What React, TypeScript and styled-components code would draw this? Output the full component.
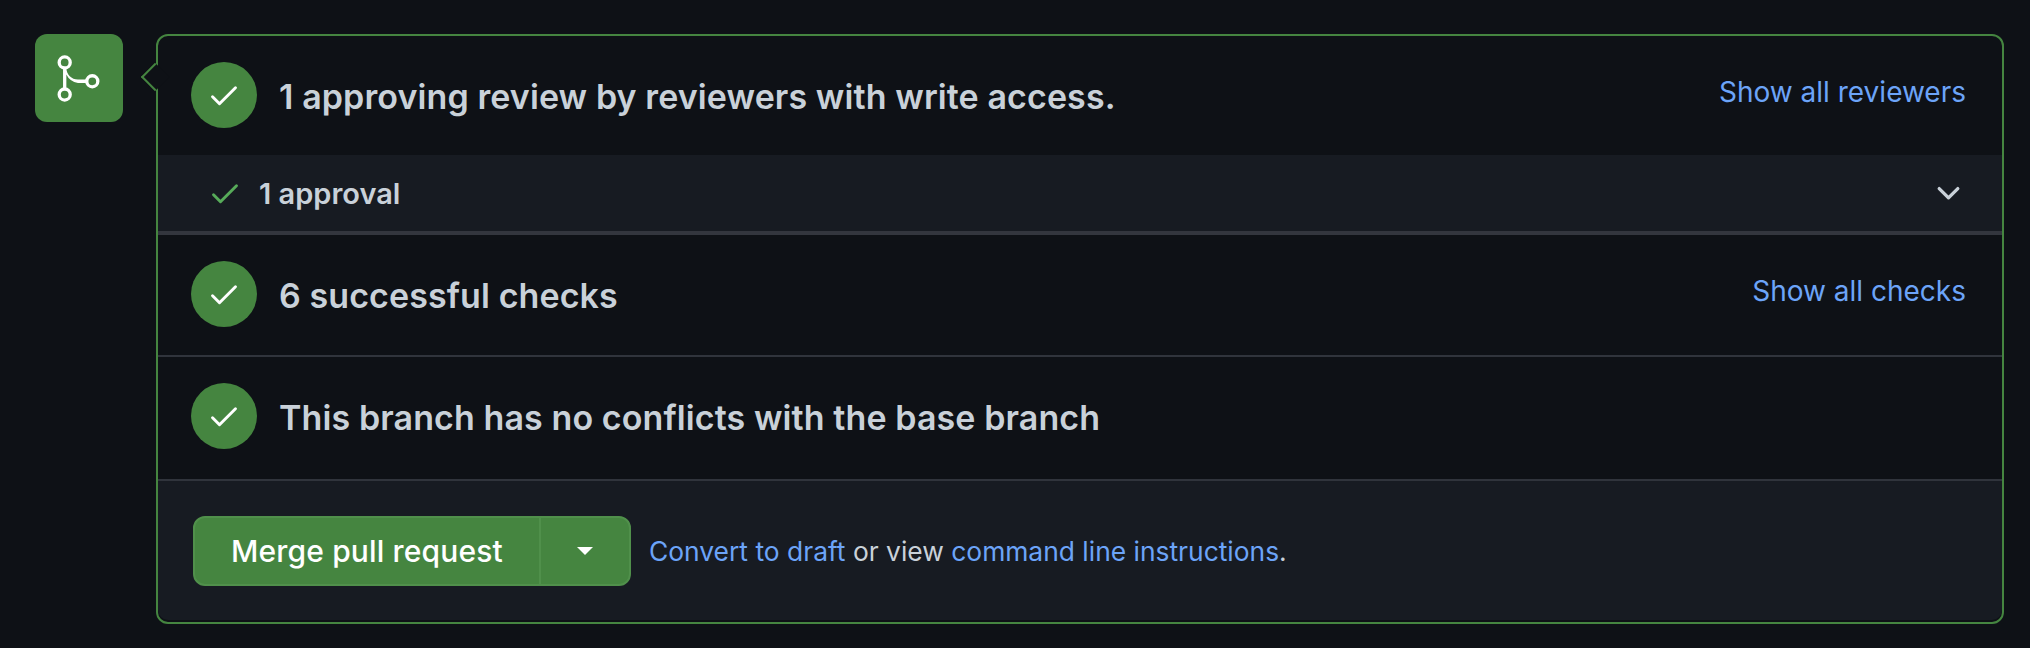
import styled, { createGlobalStyle } from "styled-components";

const GlobalStyle = createGlobalStyle`
	html, body {
		margin: 0;
		padding: 0;
		background: #0e1116;
	}
	body {
		font-family: Inter, "Liberation Sans", sans-serif;
		color: #c9d1d9;
	}
`;

const green = "#458540";

const Page = styled.div`
	display: flex;
	align-items: flex-start;
	width: 2030px;
	height: 648px;
	box-sizing: border-box;
	padding: 34px 26px 0 35px;
	gap: 33px;
	background: #0e1116;
`;

const Badge = styled.div`
	flex: none;
	display: flex;
	align-items: center;
	justify-content: center;
	width: 88px;
	height: 88px;
	padding-right: 1px;
	box-sizing: border-box;
	border-radius: 12px;
	background: ${green};
	color: #fff;
`;

const Panel = styled.section`
	position: relative;
	flex: 1;
	box-sizing: border-box;
	height: 590px;
	border: 2px solid ${green};
	border-radius: 12px;

	&::before {
		content: "";
		position: absolute;
		left: -13px;
		top: 31px;
		width: 20px;
		height: 20px;
		box-sizing: border-box;
		background: #0e1116;
		border-left: 2px solid ${green};
		border-bottom: 2px solid ${green};
		transform: rotate(45deg);
	}
`;

const Row = styled.div<{ $height: number; $divider?: boolean }>`
	display: flex;
	align-items: flex-start;
	box-sizing: border-box;
	height: ${(p) => p.$height}px;
	padding: 26px 36px 0 33px;
	gap: 22px;
	border-bottom: ${(p) => (p.$divider ? "2px solid #30343c" : "none")};
`;

const Circle = styled.div`
	flex: none;
	display: flex;
	align-items: center;
	justify-content: center;
	width: 66px;
	height: 66px;
	border-radius: 50%;
	background: ${green};
	color: #fff;
`;

const Heading = styled.h3`
	flex: 1;
	margin: 0;
	padding-top: 15px;
	font-size: 34px;
	letter-spacing: 0.1px;
	line-height: 40px;
	font-weight: 600;
	color: #c9d1d9;
`;

const SideLink = styled.a`
	flex: none;
	padding-top: 13px;
	font-size: 28px;
	line-height: 34px;
	color: #6ca4f8;
`;

const SubRow = styled.div`
	display: flex;
	align-items: center;
	box-sizing: border-box;
	height: 80px;
	padding: 0 36px 0 49px;
	background: #171b22;
	border-bottom: 4px solid #33363e;
	color: #c9d1d9;
`;

const SubCheck = styled.span`
	display: flex;
	margin-right: 16px;
	color: #57ab5a;
`;

const SubLabel = styled.span`
	flex: 1;
	font-size: 29px;
	font-weight: 600;
`;

const Footer = styled.div`
	display: flex;
	align-items: center;
	box-sizing: border-box;
	height: 141px;
	padding: 0 35px;
	gap: 18px;
	background: #171b22;
	border-top: 2px solid #30343c;
	border-radius: 0 0 10px 10px;
	font-size: 26.4px;
`;

const ButtonGroup = styled.div`
	display: flex;
	height: 70px;
	box-sizing: border-box;
	border: 2px solid #50904b;
	border-radius: 12px;
	background: ${green};
	color: #fff;
`;

const MergeButton = styled.div`
	display: flex;
	align-items: center;
	width: 346px;
	box-sizing: border-box;
	padding-left: 36px;
	font-size: 30px;
	letter-spacing: 0.15px;
	font-weight: 500;
	border-right: 2px solid #50904b;
`;

const CaretButton = styled.div`
	display: flex;
	align-items: center;
	justify-content: center;
	flex: none;
	width: 88px;

	&::after {
		content: "";
		border-style: solid;
		border-width: 8px 8px 0;
		border-color: #fff transparent transparent;
	}
`;

const Hint = styled.p`
	margin: 0;
	color: #c9d1d9;
`;

const InlineLink = styled.a`
	color: #6ca4f8;
`;

function CheckIcon({ size }: { size: number }) {
	return (
		<svg
			width={size}
			height={size}
			viewBox="0 0 16 16"
			fill="none"
			stroke="currentColor"
			strokeWidth={1.3}
			strokeLinecap="round"
			strokeLinejoin="round"
		>
			<path d="M2.9 8.75 6 11.85l7.1-7.1" />
		</svg>
	);
}

function ChevronIcon() {
	return (
		<svg width={35} height={35} viewBox="0 0 16 16" fill="currentColor">
			<path d="M12.78 5.22a.749.749 0 0 1 0 1.06l-4.25 4.25a.749.749 0 0 1-1.06 0L3.22 6.28a.749.749 0 1 1 1.06-1.06L8 8.939l3.72-3.719a.749.749 0 0 1 1.06 0Z" />
		</svg>
	);
}

function MergeIcon() {
	return (
		<svg width={53} height={53} viewBox="0 0 24 24" fill="currentColor">
			<path d="M15 13.25a3.25 3.25 0 1 1 6.5 0 3.25 3.25 0 0 1-6.5 0Zm-12.5 6a3.25 3.25 0 1 1 6.5 0 3.25 3.25 0 0 1-6.5 0Zm0-14.5a3.25 3.25 0 1 1 6.5 0 3.25 3.25 0 0 1-6.5 0ZM5.75 6.5a1.75 1.75 0 1 0-.001-3.501A1.75 1.75 0 0 0 5.75 6.5Zm0 14.5a1.75 1.75 0 1 0-.001-3.501A1.75 1.75 0 0 0 5.75 21Zm12.5-6a1.75 1.75 0 1 0-.001-3.501A1.75 1.75 0 0 0 18.25 15Z" />
			<path d="M6.5 7.25c0 2.9 2.35 5.25 5.25 5.25h4.5V14h-4.5A6.75 6.75 0 0 1 6.5 10.243v6.507H5V7.25h1.5Z" />
		</svg>
	);
}

export default function App() {
	return (
		<>
			<GlobalStyle />
			<Page>
				<Badge>
					<MergeIcon />
				</Badge>
				<Panel>
					<Row $height={119}>
						<Circle>
							<CheckIcon size={36} />
						</Circle>
						<Heading>1 approving review by reviewers with write access.</Heading>
						<SideLink>Show all reviewers</SideLink>
					</Row>
					<SubRow>
						<SubCheck>
							<CheckIcon size={36} />
						</SubCheck>
						<SubLabel>1 approval</SubLabel>
						<ChevronIcon />
					</SubRow>
					<Row $height={122} $divider>
						<Circle>
							<CheckIcon size={36} />
						</Circle>
						<Heading>6 successful checks</Heading>
						<SideLink>Show all checks</SideLink>
					</Row>
					<Row $height={122}>
						<Circle>
							<CheckIcon size={36} />
						</Circle>
						<Heading>This branch has no conflicts with the base branch</Heading>
					</Row>
					<Footer>
						<ButtonGroup>
							<MergeButton>Merge pull request</MergeButton>
							<CaretButton />
						</ButtonGroup>
						<Hint>
							<InlineLink>Convert to draft</InlineLink> or view{" "}
							<InlineLink>command line instructions</InlineLink>.
						</Hint>
					</Footer>
				</Panel>
			</Page>
		</>
	);
}
